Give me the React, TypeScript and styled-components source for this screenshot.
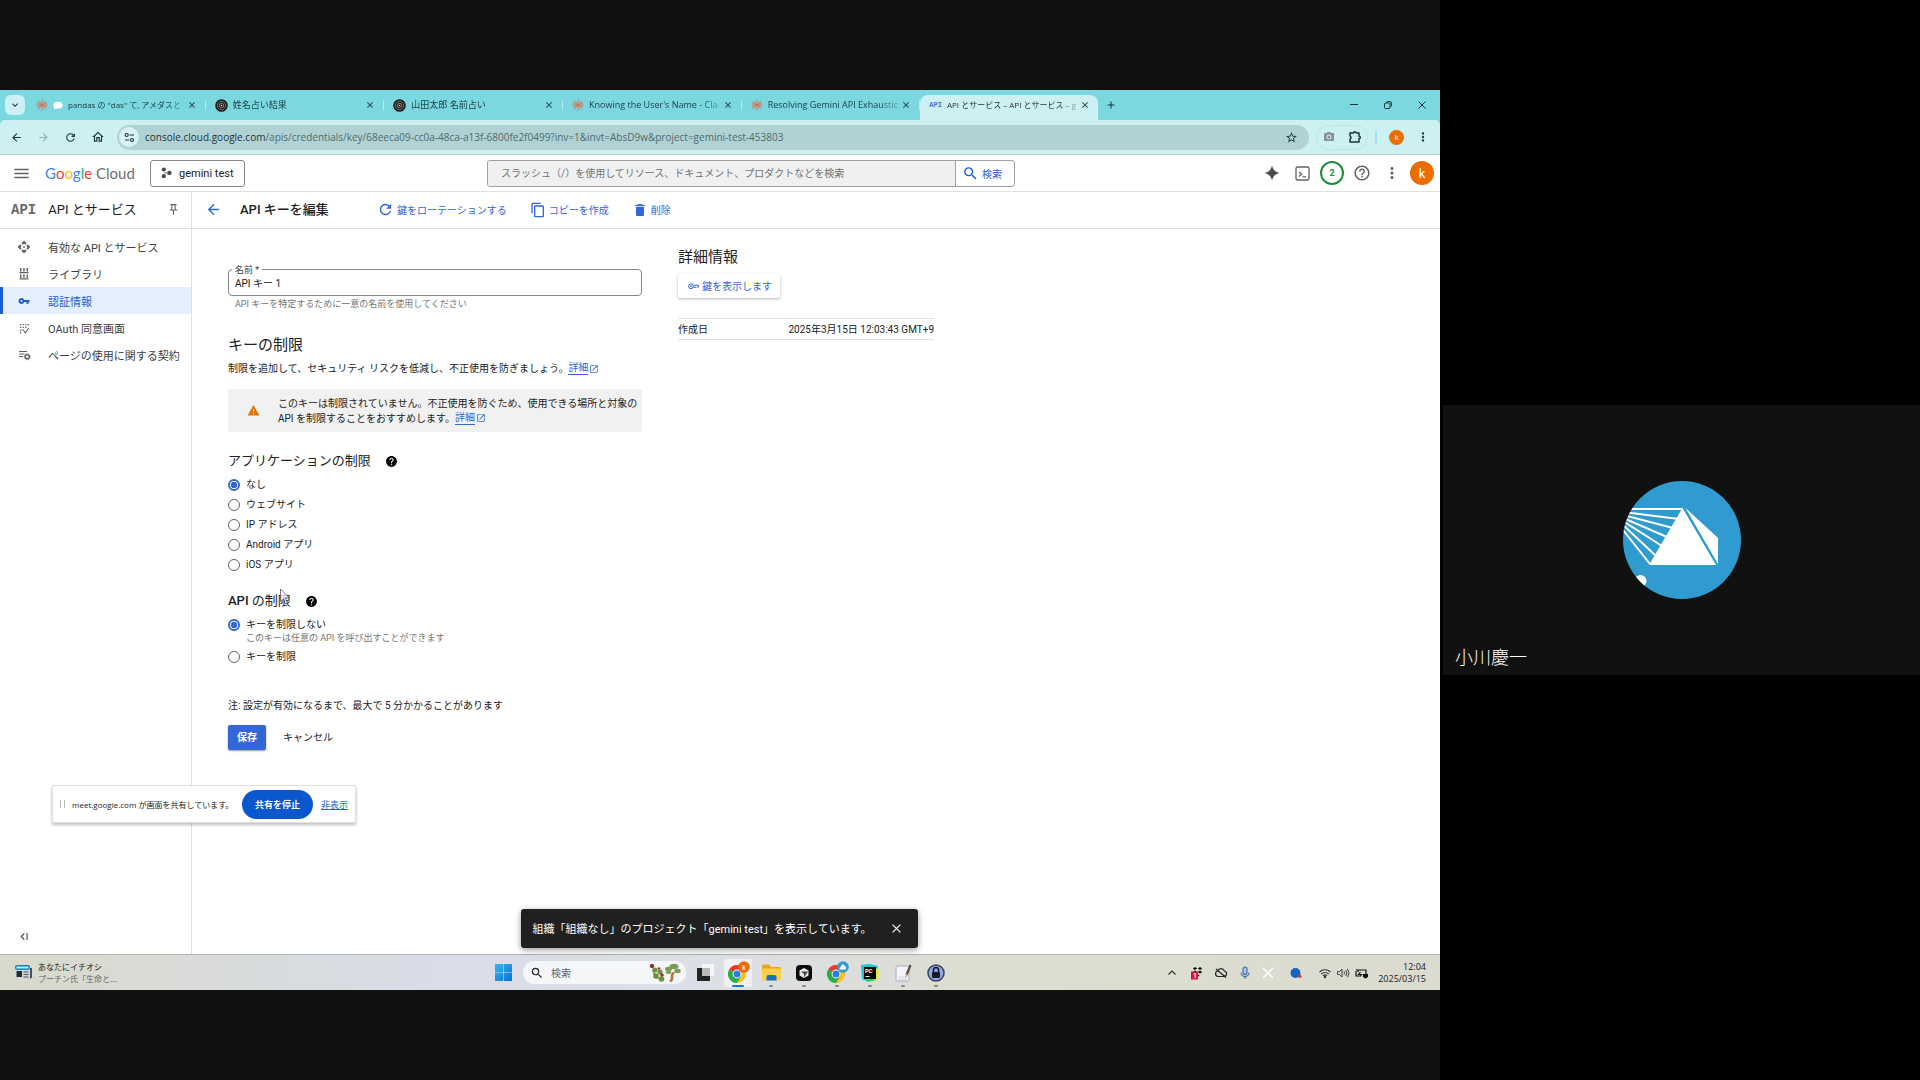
import React, { useState } from "react";
import styled, { createGlobalStyle, css } from "styled-components";
import {
  MdApi, MdArrowBack, MdArrowForward, MdClose, MdContentCopy, MdDelete, MdHelp, MdHelpOutline, MdMenu,
  MdMoreVert, MdOpenInNew, MdOutlineHome, MdOutlinePushPin,
  MdPhotoCamera, MdRefresh, MdSearch, MdStarOutline, MdVpnKey, MdWarning, MdAdd, MdExpandMore,
} from "react-icons/md";

const ui = `Roboto, "Noto Sans CJK JP", sans-serif`;
const chromeFont = `"Open Sans", "Noto Sans CJK JP", sans-serif`;
const blue = "#1a5fd0";
const linkBlue = "#3367d6";
const line = "#e0e0e0";

const Global = createGlobalStyle`
  *, *::before, *::after { box-sizing: border-box; }
  body { margin: 0; background: #000; font-family: ${ui}; color: #202124; }
  button, input { font: inherit; color: inherit; }
  button { border: 0; padding: 0; background: none; cursor: pointer; }
  h1, h2, h3, p, ul { margin: 0; padding: 0; font-weight: 400; }
  svg { display: block; flex: none; }
`;

/* ---------- call layout ---------- */

const Call = styled.div`
  display: grid;
  grid-template-columns: 3fr 1fr;
  min-height: 100vh;
  background: #000;
`;

const Stage = styled.main`
  display: flex;
  flex-direction: column;
  justify-content: center;
  background: #111;
`;

const Desktop = styled.section`
  position: relative;
  display: flex;
  flex-direction: column;
  aspect-ratio: 16 / 10;
  background: #fff;
  overflow: hidden;
`;

const People = styled.aside`
  display: flex;
  flex-direction: column;
  justify-content: center;
  padding-left: 3px;
`;

const Tile = styled.div`
  position: relative;
  display: flex;
  align-items: center;
  justify-content: center;
  aspect-ratio: 53 / 30;
  background: #111;
`;

const TileName = styled.span`
  position: absolute;
  left: 12px;
  bottom: 4px;
  font-size: 18px;
  line-height: 26px;
  color: #fff;
  font-weight: 300;
`;

/* ---------- browser ---------- */

const IconButton = styled.button<{ $w?: number; $h?: number; $color?: string }>`
  display: flex;
  align-items: center;
  justify-content: center;
  flex: none;
  width: ${(p) => p.$w ?? 20}px;
  height: ${(p) => p.$h ?? 20}px;
  color: ${(p) => p.$color ?? "#1f3336"};
`;

const TabStrip = styled.div`
  display: flex;
  align-items: center;
  height: 30px;
  flex: none;
  padding-left: 5px;
  background: #7bd8e1;
  font-family: ${chromeFont};
`;

const TabSearch = styled(IconButton)`
  margin-right: 2px;
  border-radius: 6px;
  background: #cdf0f3;
`;

const Tabs = styled.div`
  display: flex;
  align-self: stretch;
  flex: 0 1 1071px;
  min-width: 0;
`;

const Tab = styled.div<{ $active?: boolean; $compact?: boolean }>`
  display: flex;
  align-items: center;
  flex: 1 1 0;
  min-width: 0;
  gap: 5px;
  padding: 0 7px 0 9px;
  font-size: ${(p) => (p.$compact ? 8 : 9)}px;
  color: #1d4147;
  border-right: 1px solid #b5eaef;
  margin: 10px 0;
  ${(p) =>
    p.$active &&
    css`
      margin: 5px 0 0;
      padding-bottom: 5px;
      border: 0;
      border-radius: 8px 8px 0 0;
      background: #cdf0f3;
      color: #1f2d30;
    `}
`;

const TabTitle = styled.span`
  flex: 1;
  min-width: 0;
  margin-right: -3px;
  overflow: hidden;
  white-space: nowrap;
  line-height: 16px;
  mask-image: linear-gradient(to right, #000 85%, rgba(0, 0, 0, 0.3));
`;

const ApiMark = styled.span<{ $size: number }>`
  font: 700 ${(p) => p.$size}px "Liberation Mono", monospace;
  color: ${(p) => (p.$size < 10 ? "#4a6fdc" : "#6b6b6b")};
`;

const WindowButtons = styled.div`
  display: flex;
  gap: 14px;
  margin-left: auto;
  padding-right: 8px;
`;

const Toolbar = styled.div`
  display: flex;
  align-items: center;
  flex: none;
  height: 35px;
  padding: 0 7px 0 3px;
  background: #cdf0f3;
  border-bottom: 1px solid #b4cdd0;
  border-radius: 5px 5px 0 0;
  font-family: ${chromeFont};
`;

const ToolbarWrap = styled.div`
  flex: none;
  background: #7bd8e1;
`;

const Address = styled.div`
  display: flex;
  align-items: center;
  flex: 1;
  min-width: 0;
  height: 25px;
  margin: 0 7px 0 6px;
  padding: 0 8px 0 2px;
  border-radius: 13px;
  background: #b1d2d5;
`;

const SiteInfo = styled(IconButton)`
  margin-right: 6px;
  border-radius: 50%;
  background: #d8f2f4;
`;

const Url = styled.span`
  flex: 1;
  min-width: 0;
  overflow: hidden;
  white-space: nowrap;
  font-size: 10px;
  line-height: 16px;
  color: #4c6b6f;

  b { font-weight: 400; color: #1f3336; }
`;

const Extensions = styled.div`
  display: flex;
  align-items: center;
  justify-content: space-between;
  width: 52px;
  height: 25px;
  padding: 0 2px;
  border: 1px solid #b9e6ea;
  border-radius: 13px;
`;

const Rule = styled.span`
  width: 2px;
  height: 12px;
  margin: 0 12px 0 7px;
  background: #9fe1e8;
`;

const Avatar = styled.span<{ $size: number }>`
  display: flex;
  align-items: center;
  justify-content: center;
  width: ${(p) => p.$size}px;
  height: ${(p) => p.$size}px;
  border-radius: 50%;
  background: #ec6c00;
  color: #fff;
  font-size: ${(p) => (p.$size > 20 ? 13 : 8)}px;
  line-height: 1;
`;

const ProfileGroup = styled.div`
  display: flex;
  align-items: center;
  gap: 9px;
`;

/* ---------- console ---------- */

const TopBar = styled.header`
  display: flex;
  align-items: center;
  flex: none;
  height: 37px;
  padding: 0 6px 0 10px;
  border-bottom: 1px solid ${line};
`;

const Logo = styled.a`
  width: 95px;
  margin-left: 13px;
  font: 400 15px Lato, sans-serif;
  line-height: 20px;
  color: #6b6f73;
  text-decoration: none;
  white-space: nowrap;
`;

const Letter = styled.span<{ $c: string }>`
  color: ${(p) => p.$c};
`;

const ProjectButton = styled.button`
  display: flex;
  align-items: center;
  gap: 7px;
  width: 95px;
  height: 27px;
  padding-left: 10px;
  margin-left: 10px;
  border: 1px solid #80868b;
  border-radius: 3px;
  font-size: 11px;
  white-space: nowrap;
`;

const SearchForm = styled.form`
  display: flex;
  flex: 0 1 528px;
  height: 27px;
  margin-left: 242px;
  border: 1px solid #9aa0a6;
  border-radius: 3px;
  overflow: hidden;
`;

const SearchInput = styled.input`
  flex: 1;
  min-width: 0;
  padding: 0 13px;
  border: 0;
  border-right: 1px solid #9aa0a6;
  background: #f0f0f0;
  font-size: 10px;
  outline: none;

  &::placeholder { color: #6f7377; opacity: 1; }
`;

const SearchButton = styled.button`
  display: flex;
  align-items: center;
  gap: 3px;
  width: 58px;
  padding-left: 6px;
  font-size: 10px;
  color: ${blue};
`;

const TopActions = styled.div`
  display: flex;
  align-items: center;
  gap: 6px;
  margin-left: auto;
`;

const Trial = styled.button`
  width: 24px;
  height: 24px;
  border: 2px solid #1e8e3e;
  border-radius: 50%;
  font-size: 9px;
  font-weight: 700;
  color: #1e8e3e;
`;

const Console = styled.div`
  display: grid;
  grid-template-columns: 192px 1fr;
  flex: 1;
  min-height: 0;
`;

const Side = styled.nav`
  display: flex;
  flex-direction: column;
  border-right: 1px solid ${line};
`;

const BarRow = styled.div`
  display: flex;
  align-items: center;
  flex: none;
  height: 37px;
  padding-bottom: 1px;
  border-bottom: 1px solid ${line};
  white-space: nowrap;
`;

const SideHead = styled(BarRow)`
  padding-right: 8px;
  padding-left: 11px;
`;

const SideTitle = styled.h2`
  flex: 1;
  margin-left: 12px;
  font-size: 13px;
  line-height: 20px;
`;

const NavList = styled.ul`
  flex: 1;
  padding-top: 4px;
  list-style: none;
`;

const NavLink = styled.a<{ $active?: boolean }>`
  display: flex;
  align-items: center;
  gap: 16px;
  height: 27px;
  padding-left: 13px;
  border-left: 3px solid ${(p) => (p.$active ? blue : "transparent")};
  background: ${(p) => (p.$active ? "#e5effb" : "transparent")};
  color: ${(p) => (p.$active ? blue : "#3c4043")};
  font-size: 11px;
  text-decoration: none;
  white-space: nowrap;

  svg { width: 16px; color: ${(p) => (p.$active ? blue : "#5f6368")}; }
`;

const Collapse = styled(IconButton)`
  margin: 0 0 8px 14px;
`;

const PageHead = styled(BarRow)`
  padding-left: 11px;
`;

const PageTitle = styled.h1`
  width: 126px;
  margin-left: 17px;
  font-size: 13px;
  font-weight: 500;
  line-height: 20px;
`;

const PageActions = styled.div`
  display: flex;
  gap: 23px;
  margin-left: 11px;
`;

const PageAction = styled.button`
  display: flex;
  align-items: center;
  gap: 3px;
  font-size: 10px;
  color: ${linkBlue};
`;

const Content = styled.div`
  display: flex;
  align-items: flex-start;
  gap: 36px;
  padding-left: 36px;
  font-size: 10px;
  line-height: 15px;
`;

const Form = styled.form`
  flex: 0 1 414px;
  padding-top: 40px;
  white-space: nowrap;
`;

const Field = styled.div`
  position: relative;
  display: flex;
`;

const FieldLabel = styled.label`
  position: absolute;
  top: -5px;
  left: 4px;
  padding: 0 3px;
  background: #fff;
  font-size: 9px;
  line-height: 12px;
  color: #3c4043;
`;

const FieldInput = styled.input`
  flex: 1;
  min-width: 0;
  height: 27px;
  padding: 0 6px;
  border: 1px solid #80868b;
  border-radius: 4px;
  background: transparent;
  outline: none;
`;

const Hint = styled.p<{ $indent: number }>`
  padding-left: ${(p) => p.$indent}px;
  font-size: 9px;
  line-height: 12px;
  color: #757575;
`;

const FieldHint = styled(Hint)`
  margin-top: 2px;
`;

const Heading = styled.h2`
  font-size: 15px;
  line-height: 20px;
`;

const KeyHeading = styled(Heading)`
  margin: 25px 0 6px;
`;

const SubHeading = styled.h3`
  display: flex;
  align-items: center;
  gap: 14px;
  margin: 20px 0 8px;
  font-size: 13px;
  line-height: 18px;

  b { font-weight: 500; }
  svg { color: #000; }
`;

const Text = styled.p`
  display: flex;
  align-items: center;
`;

const DocLink = styled.a`
  display: inline-flex;
  align-items: center;
  gap: 1px;
  color: ${linkBlue};
  text-decoration: none;

  span { border-bottom: 1px solid ${linkBlue}; line-height: 12px; }
`;

const Notice = styled.div`
  display: flex;
  align-items: center;
  gap: 18px;
  min-height: 43px;
  margin-top: 13px;
  padding-left: 19px;
  border-radius: 3px;
  background: #f1f1f1;

  > svg { color: #e37400; }
`;

const Options = styled.div`
  display: flex;
  flex-direction: column;
  gap: 6px;
`;

const Option = styled.label`
  display: flex;
  align-items: center;
  gap: 6px;
  line-height: 14px;
`;

const Radio = styled.input`
  appearance: none;
  width: 12px;
  height: 12px;
  margin: 0;
  border: 1px solid #5f6368;
  border-radius: 50%;

  &:checked {
    border: 2px solid ${linkBlue};
    background: radial-gradient(circle, ${linkBlue} 0 3px, #fff 3px);
  }
`;

const FormNote = styled.p`
  margin: 35px 0 12px;
  line-height: 14px;
`;

const Buttons = styled.div`
  display: flex;
  gap: 17px;
`;

const Save = styled.button`
  width: 38px;
  height: 25px;
  border-radius: 2px;
  background: ${linkBlue};
  box-shadow: 0 1px 2px rgba(0, 0, 0, 0.4);
  color: #fff;
  font-weight: 700;
`;

const Details = styled.section`
  flex: 0 1 256px;
  padding-top: 18px;
  white-space: nowrap;
`;

const ShowKey = styled.button`
  display: flex;
  align-items: center;
  gap: 3px;
  height: 24px;
  margin: 7px 0 20px;
  padding: 0 8px 0 10px;
  border-radius: 2px;
  box-shadow: 0 1px 3px rgba(0, 0, 0, 0.3);
  color: ${linkBlue};
`;

const Facts = styled.table`
  width: 100%;
  border-collapse: collapse;

  tr { height: 21px; border: solid ${line}; border-width: 1px 0; }
  th, td { padding: 0; font-weight: 400; text-align: left; }
  td { text-align: right; }
`;

/* ---------- floating layers ---------- */

const ShareBar = styled.div`
  position: absolute;
  left: 52px;
  bottom: 167px;
  display: flex;
  align-items: center;
  height: 38px;
  padding: 0 7px;
  border: 1px solid ${line};
  background: #fff;
  box-shadow: 0 2px 3px rgba(0, 0, 0, 0.25);
  font-family: ${chromeFont};
  font-size: 9px;
  white-space: nowrap;
`;

const Grip = styled.span`
  width: 5px;
  height: 8px;
  margin-right: 7px;
  border: solid #b8b8b8;
  border-width: 0 1px;
`;

const ShareText = styled.span`
  width: 162px;
  font-size: 8px;
`;

const StopShare = styled.button`
  height: 29px;
  padding: 0 13px;
  margin: 0 8px;
  border-radius: 15px;
  background: #0b57d0;
  color: #fff;
  font-weight: 700;
`;

const HideLink = styled.a`
  width: 27px;
  color: #1a66c8;
`;

const Toast = styled.div`
  position: absolute;
  right: 2px;
  bottom: 42px;
  left: 0;
  display: flex;
  align-items: center;
  justify-content: space-between;
  width: 397px;
  height: 39px;
  margin: 0 auto;
  padding: 0 11px 1px 12px;
  border-radius: 3px;
  background: #202020;
  box-shadow: 0 2px 6px rgba(0, 0, 0, 0.4);
  color: #fff;
  font-size: 11px;
  white-space: nowrap;
`;

const Pointer = styled.svg`
  position: absolute;
  top: 498px;
  left: 279px;
`;

/* ---------- taskbar ---------- */

const Taskbar = styled.footer`
  display: grid;
  grid-template-columns: 1fr auto 1fr;
  align-items: center;
  flex: none;
  height: 36px;
  border-top: 1px solid #b3b4b0;
  background: linear-gradient(to right, #d9dacc, #d8dde8 30%, #dcdfe6 50%, #ddddd0 68%, #dbdbd0);
  font-family: ${chromeFont};
`;

const Widget = styled.button`
  display: flex;
  align-items: center;
  gap: 6px;
  padding-left: 15px;
  font-size: 8px;
  line-height: 12px;
  text-align: left;
  font-family: "Noto Sans CJK JP", sans-serif;

  small { display: block; font-size: 8px; color: #666; }
`;

const Dock = styled.div`
  display: flex;
  align-items: center;
  gap: 5px;
  padding-left: 5px;
`;

const DockSearch = styled.label`
  display: flex;
  align-items: center;
  gap: 7px;
  width: 163px;
  height: 23px;
  margin: 0 0 0 6px;
  padding: 0 5px 0 7px;
  border-radius: 12px;
  background: #f5f6f8;

  input {
    flex: 1;
    min-width: 0;
    padding: 0;
    border: 0;
    background: none;
    font-size: 10px;
    outline: none;
  }
  input::placeholder { color: #5f6368; opacity: 1; }
`;

const DockApp = styled.button<{ $state?: "open" | "active" }>`
  position: relative;
  display: flex;
  align-items: center;
  justify-content: center;
  width: 28px;
  height: 28px;
  border-radius: 3px;
  background: ${(p) => (p.$state === "active" ? "#f0f1f2" : "none")};

  &::after {
    content: "";
    position: absolute;
    bottom: 0;
    width: ${(p) => (p.$state === "active" ? 12 : 4)}px;
    height: 2px;
    border-radius: 1px;
    background: ${(p) => (p.$state === "active" ? "#1a78c8" : p.$state ? "#888" : "transparent")};
  }
`;

const Tray = styled.div`
  display: flex;
  align-items: center;
  justify-content: flex-end;
  gap: 10px;
  padding-right: 14px;
`;

const TrayGroup = styled.div`
  display: flex;
  gap: 4px;
  margin-left: 5px;
`;

const Clock = styled.time`
  font-size: 9px;
  line-height: 12px;
  text-align: right;
  white-space: nowrap;
`;

/* ---------- drawings ---------- */

const Burst = () => (
  <svg width="12" height="12" viewBox="0 0 12 12" stroke="#d9704f" strokeWidth=".9" strokeLinecap="round">
    <path d="M6 .8v10.4M.8 6h10.400M2.500 2l7 8M9.500 2l-7 8M1.300 3.800l9.400 4.400M1.300 8.200l9.400-4.400" />
  </svg>
);

const Disc = () => (
  <svg width="13" height="13" viewBox="0 0 13 13" fill="none">
    <circle cx="6.500" cy="6.500" r="6.300" fill="#1d1d1d" />
    <circle cx="6.500" cy="6.500" r="4.200" stroke="#8d8580" strokeWidth=".8" />
    <circle cx="6.500" cy="6.500" r="2.200" stroke="#a79f9a" strokeWidth=".8" />
    <circle cx="6.500" cy="6.500" r=".8" fill="#ccc" />
  </svg>
);

const Bubble = () => (
  <svg width="10" height="9" viewBox="0 0 10 9" fill="#fff">
    <ellipse cx="5" cy="4.200" rx="4.600" ry="3.400" />
    <path d="M1.400 5.500L.6 8.400 4 7z" />
  </svg>
);

const Tune = () => (
  <svg width="11" height="11" viewBox="0 0 11 11" fill="none" stroke="#1f3336" strokeWidth="1.100">
    <circle cx="2.700" cy="3" r="1.500" />
    <path d="M5.500 3H10M1 8h4.200" />
    <circle cx="8" cy="8" r="1.500" />
  </svg>
);

const Puzzle = () => (
  <svg width="14" height="14" viewBox="0 0 14 14" fill="none" stroke="#1f3336" strokeWidth="1.500" strokeLinejoin="round">
    <path d="M2 3h3.500a1.300 1.300 0 0 1 2.600 0H11v3.200a1.300 1.300 0 0 1 0 2.600V12H2V9.300q2-1.800 0-3.600z" />
  </svg>
);

const Minimize = () => (
  <svg width="8" height="8" viewBox="0 0 8 8" stroke="#1f3336"><path d="M0 3.500h8" /></svg>
);

const Restore = () => (
  <svg width="8" height="8" viewBox="0 0 8 8" fill="none" stroke="#1f3336">
    <rect x=".5" y="2" width="5.500" height="5.500" rx="1" />
    <path d="M2.300 1.700Q2.400.6 3.600.6H6q1.500 0 1.500 1.500v2.400q0 1.100-1.100 1.200" />
  </svg>
);

const Cross = ({ color = "#1f3336", size = 8 }: { color?: string; size?: number }) => (
  <svg width={size} height={size} viewBox="0 0 8 8" stroke={color} strokeWidth="1"><path d="M.5.5l7 7M7.500.5l-7 7" /></svg>
);

const ProjectDots = () => (
  <svg width="11" height="12" viewBox="0 0 11 12" fill="#4a4d50">
    <circle cx="2.800" cy="2.500" r="2.100" /><circle cx="2.800" cy="9.200" r="2.100" /><circle cx="8.400" cy="5.900" r="2.200" />
    <path d="M3 5.200h3.500v1.400H3z" opacity=".5" />
  </svg>
);

const Spark = () => (
  <svg width="16" height="16" viewBox="0 0 16 16" fill="#4a4d50">
    <path d="M8 .5C8.800 4.800 11.200 7.200 15.500 8 11.200 8.800 8.800 11.200 8 15.500 7.200 11.200 4.800 8.800.5 8 4.800 7.200 7.200 4.800 8 .5z" />
  </svg>
);

const Shell = () => (
  <svg width="15" height="15" viewBox="0 0 15 15" fill="none" stroke="currentColor" strokeWidth="1.300">
    <rect x="1" y="1" width="13" height="13" rx="1.500" />
    <path d="M4 6l2.500 2.200L4 10.400M7.500 10.800h3.500" />
  </svg>
);

const Library = () => (
  <svg width="16" height="12" viewBox="0 0 16 12" fill="currentColor">
    <path d="M4 0h1.500v3.500H4zM7.200 0h1.500v3.500H7.200zM10.500 0H12v3.500h-1.500zM3.500 4h9v1.200h-9zM4 6.500h1.500v3.300H4zM7.200 6.500h1.500v3.300H7.200zM10.500 6.500H12v3.300h-1.500zM3.500 10.300h9v1.200h-9z" />
  </svg>
);

const Consent = () => (
  <svg width="16" height="12" viewBox="0 0 16 12" fill="currentColor">
    <path d="M4 2h1.300v1.300H4zM6.600 2h1.300v1.300H6.600zM9.200 2h1.300v1.300H9.200zM11.600 2h1.300v1.300h-1.300zM4 4.800h1.300v1.300H4zM6.600 4.800h1.300v1.300H6.600zM9.200 4.800h1.300v1.300H9.200zM4 7.600h1.300v1.300H4zM4 10.200h1.300v1.300H4zM6.600 7.600h1.300v1.300H6.600z" />
    <path d="M8 9.200l1.400 1.600L12.800 6" fill="none" stroke="currentColor" strokeWidth="1.100" />
  </svg>
);

const Agreement = () => (
  <svg width="16" height="12" viewBox="0 0 16 12" fill="none" stroke="currentColor">
    <path d="M3 2.500h8M3 5h5.500M3 7.500h4" strokeWidth="1.200" />
    <circle cx="11.300" cy="7.800" r="2" strokeWidth="1.400" />
    <circle cx="11.300" cy="7.800" r="3" strokeWidth="1" strokeDasharray="1.200 1.150" />
  </svg>
);

const KeyOutline = () => (
  <svg width="11" height="8" viewBox="0 0 11 8" fill="none" stroke="currentColor" strokeWidth="1">
    <circle cx="3" cy="4.300" r="2.400" /><circle cx="3" cy="4.300" r=".6" />
    <path d="M5.400 3.300h5v2H9.300M5.400 5.300h3" />
  </svg>
);

const CollapseMark = () => (
  <svg width="9" height="9" viewBox="0 0 9 9" fill="none" stroke="#4a4d50" strokeWidth="1.200">
    <path d="M4.300 1.500l-3 3 3 3M7.100 1v7" />
  </svg>
);

const PyramidAvatar = () => (
  <svg width="118" height="118" viewBox="0 0 118 118">
    <clipPath id="disc"><circle cx="59" cy="59" r="59" /></clipPath>
    <g clipPath="url(#disc)">
      <rect width="118" height="118" fill="#2f9bcf" />
      <g stroke="#fff" strokeWidth="2">
        <path d="M0 28h60M0 31l56 7M0 34l50 13M0 37l44 19M0 40l39 25M0 44l33 31M0 49l27 34" />
      </g>
      <path d="M59.500 27L93 84H26z" fill="#fff" />
      <path d="M62.500 27L95 57v26z" fill="#fff" />
      <circle cx="17.500" cy="100" r="6" fill="#fff" />
      <path d="M11 97l9 9" stroke="#c22" strokeWidth="1" />
    </g>
  </svg>
);

const NewsIcon = () => (
  <svg width="17" height="15" viewBox="0 0 17 15">
    <rect x="1" y="5" width="15" height="9.500" rx="1" fill="#d4d7d9" />
    <path d="M15 3h2v9.500l-2 1.500z" fill="#45525c" />
    <rect width="15" height="5" rx="2" fill="#1684b8" /><rect x="1.500" y="1.500" width="12" height="2" fill="#bfe8f5" />
    <rect x="1.500" y="6" width="5.500" height="6" fill="#222c33" />
    <path d="M8.500 7h5M8.500 9.500h5M8.500 12h5" stroke="#4b555c" />
  </svg>
);

const WindowsLogo = () => (
  <svg width="17" height="17" viewBox="0 0 17 17">
    <linearGradient id="win" x2="1" y2="1"><stop stopColor="#35b8ef" /><stop offset="1" stopColor="#0871cf" /></linearGradient>
    <path d="M0 0h8.200v8.200H0zM8.800 0H17v8.200H8.800zM0 8.800h8.200V17H0zM8.800 8.800H17V17H8.800z" fill="url(#win)" />
  </svg>
);

const Bonsai = () => (
  <svg width="32" height="20" viewBox="0 0 32 20">
    <path d="M4 6q1 10 9 10" stroke="#a3a07a" strokeWidth="2" fill="none" />
    <g fill="#6f8f3a"><circle cx="6" cy="7" r="2.500" /><circle cx="11" cy="9" r="2.500" /><circle cx="7" cy="13" r="2.800" /><circle cx="12.500" cy="16" r="2.800" /></g>
    <g fill="#8d3340"><circle cx="3" cy="3" r="2.200" /><circle cx="13" cy="12" r="1.800" /><circle cx="10" cy="5.500" r="1.300" /></g>
    <path d="M21 18.500c5-3-1-5 4-9" stroke="#b8733c" strokeWidth="2.500" fill="none" />
    <g fill="#7d9a55"><ellipse cx="19.500" cy="6" rx="3.500" ry="2.200" /><ellipse cx="25" cy="3.500" rx="4.500" ry="2.800" /><ellipse cx="28.500" cy="8" rx="3.200" ry="2.200" /><ellipse cx="19.500" cy="9.500" rx="3" ry="1.400" /></g>
  </svg>
);

const TaskView = () => (
  <svg width="17" height="17" viewBox="0 0 17 17">
    <rect x="5" width="12" height="12" fill="#f7f7f7" /><rect y="4" width="13" height="13" fill="#222" /><rect x="5" y="4" width="8" height="8" fill="#b9b9b9" />
  </svg>
);

const ChromeLogo = ({ badge }: { badge: "k" | "pyramid" }) => (
  <svg width="24" height="24" viewBox="0 0 24 24">
    <circle cx="11" cy="13" r="9" fill="#fbc116" />
    <path d="M11 13L3.200 8.500A9 9 0 0 1 18.800 8.500z" fill="#e33b2e" />
    <path d="M11 13L3.200 8.500A9 9 0 0 0 11 22l4-6.700z" fill="#2da94f" />
    <circle cx="11" cy="13" r="4.400" fill="#fff" /><circle cx="11" cy="13" r="3.500" fill="#2a7de8" />
    <circle cx="18" cy="6" r="5.800" fill={badge === "k" ? "#ec6c00" : "#2f9bcf"} />
    {badge === "k" ? (
      <text x="18" y="8.500" textAnchor="middle" fontSize="7" fill="#fff" fontFamily="Roboto">k</text>
    ) : (
      <path d="M17.500 3l3.500 3v2.500h-7z" fill="#fff" />
    )}
  </svg>
);

const Folder = () => (
  <svg width="19" height="17" viewBox="0 0 19 17">
    <path d="M0 2q0-1.500 1.500-1.500H7L9 3h8.500Q19 3 19 4.500V8H0z" fill="#e9a51c" />
    <rect y="4.500" width="19" height="12" rx="1.500" fill="#fccf4b" /><path d="M4.500 16.500V13q0-2 2-2h6q2 0 2 2v3.500z" fill="#1673c4" />
  </svg>
);

const CubeApp = () => (
  <svg width="16" height="16" viewBox="0 0 16 16">
    <rect width="16" height="16" rx="4" fill="#0c0c0c" /><path d="M8 3l4.500 2.500v5L8 13l-4.500-2.500v-5z" fill="#e6e6e6" /><path d="M5 6.500h7L8 12.500V9z" fill="#444" />
  </svg>
);

const PyCharm = () => (
  <svg width="18" height="18" viewBox="0 0 18 18">
    <path d="M0 1L9 0l8 2-2 8-8 8-6-3z" fill="#16c8d8" /><path d="M12 3l6 3-1 10-7 2-4-3z" fill="#e5ea35" /><path d="M1 11l6 7 8-2z" fill="#27d07c" />
    <rect x="3" y="3" width="12" height="12" fill="#000" /><text x="4" y="9" fontSize="6" fontWeight="700" fill="#fff" fontFamily="Roboto">PC</text><path d="M4.500 12.500h4" stroke="#fff" />
  </svg>
);

const Notepad = () => (
  <svg width="17" height="18" viewBox="0 0 17 18">
    <rect x="1" y="2" width="13" height="15" rx="1.500" fill="#f3f3fa" stroke="#a8a8ba" /><path d="M3 15h9M3 13h9" stroke="#d3d3e2" />
    <path d="M15.500 1l-4 10" stroke="#5d4a44" strokeWidth="2.200" /><path d="M11.800 10l-1 3" stroke="#dba36c" strokeWidth="1.500" />
  </svg>
);

const LockApp = () => (
  <svg width="18" height="18" viewBox="0 0 18 18" fill="none">
    <circle cx="9" cy="9" r="8" fill="#8ea5e6" stroke="#3a4254" strokeWidth="1.500" />
    <rect x="5" y="8" width="8" height="6" rx="1" fill="#161b2b" /><path d="M6.500 8V6a2.500 2.500 0 0 1 5 0v2" stroke="#161b2b" strokeWidth="1.500" />
  </svg>
);

const Chevron = () => (
  <svg width="14" height="8" viewBox="0 0 14 8" fill="none" stroke="#333" strokeWidth="1.200"><path d="M2.500 5.500L6 2l3.500 3.500" /></svg>
);

const Dropbox = () => (
  <svg width="14" height="14" viewBox="0 0 14 14">
    <path d="M5 1l2.200 1.500L5 4 2.800 2.500zM10 1l2.200 1.500L10 4 7.800 2.500zM5 4.500L7.200 6 5 7.500 2.800 6zM10 4.500L12.200 6 10 7.500 7.800 6zM7.500 8L9.700 9.500 7.500 11z" fill="#111" />
    <rect x="1" y="5.500" width="7" height="8" fill="#d9123a" /><text x="3" y="12" fontSize="7" fontWeight="700" fill="#fff" fontFamily="Roboto">1</text>
  </svg>
);

const CloudOff = () => (
  <svg width="14" height="14" viewBox="0 0 14 14" fill="none" stroke="#222" strokeWidth="1.200">
    <path d="M4 10.500a2.800 2.800 0 0 1-.3-5.500 3.600 3.600 0 0 1 6.700 0 2.800 2.800 0 0 1-.2 5.500zM2 3l10 8.500" />
  </svg>
);

const Mic = () => (
  <svg width="14" height="14" viewBox="0 0 14 14" fill="none" stroke="#3568b0" strokeWidth="1.100">
    <rect x="5" y="1" width="4" height="7.500" rx="2" fill="#a9c4e8" /><path d="M3 6.500a4 4 0 0 0 8 0M7 10.500V13" />
  </svg>
);

const BlueDisc = () => (
  <svg width="14" height="14" viewBox="0 0 14 14"><circle cx="6.500" cy="7" r="5" fill="#1266c2" /><path d="M9 8l2.500.5 1.500 3-3 .5z" fill="#c8452c" /></svg>
);

const Wifi = () => (
  <svg width="14" height="14" viewBox="0 0 14 14" fill="none" stroke="#333" strokeWidth="1.100">
    <path d="M1.500 6a8 8 0 0 1 11 0M3.300 8a5.400 5.400 0 0 1 7.400 0M5 9.800a3 3 0 0 1 4 0" /><circle cx="7" cy="11" r=".7" fill="#333" />
  </svg>
);

const Volume = () => (
  <svg width="14" height="14" viewBox="0 0 14 14" fill="none" stroke="#444" strokeWidth="1">
    <path d="M1.500 5.500h2L6 3v8L3.500 8.500h-2zM8 5.500q1 1.500 0 3M9.800 4q2 3 0 6M11.500 2.800q3 4.200 0 8.400" />
  </svg>
);

const Battery = () => (
  <svg width="14" height="14" viewBox="0 0 14 14" fill="none" stroke="#111" strokeWidth="1.200">
    <path d="M4 4h8v5M2 5v5h5M2.500 3l2 3M6.500 6l-2 2.500h3L6 10.500" /><path d="M9.500 8.500h4v2q-2 3-4 0z" fill="#111" />
  </svg>
);

/* ---------- page ---------- */

const tabs = [
  { icon: <><Burst /><Bubble /></>, title: 'pandas の "das" て, アメダスと', compact: true },
  { icon: <Disc />, title: "姓名占い結果" },
  { icon: <Disc />, title: "山田太郎 名前占い" },
  { icon: <Burst />, title: "Knowing the User's Name - Cla" },
  { icon: <Burst />, title: "Resolving Gemini API Exhaustic" },
  { icon: <ApiMark $size={7}>API</ApiMark>, title: "API とサービス – API とサービス – g", active: true, compact: true },
];

const navItems = [
  { icon: <MdApi size={14} />, label: "有効な API とサービス" },
  { icon: <Library />, label: "ライブラリ" },
  { icon: <MdVpnKey size={12} />, label: "認証情報", active: true },
  { icon: <Consent />, label: "OAuth 同意画面" },
  { icon: <Agreement />, label: "ページの使用に関する契約" },
];

const appLimits = ["なし", "ウェブサイト", "IP アドレス", "Android アプリ", "iOS アプリ"];

const brand: [string, string][] = [
  ["G", "#4285f4"], ["o", "#ea4335"], ["o", "#fbbc04"], ["g", "#4285f4"], ["l", "#34a853"], ["e", "#ea4335"],
];

const Browser = () => (
  <>
    <TabStrip>
      <TabSearch aria-label="タブを検索"><MdExpandMore size={12} /></TabSearch>
      <Tabs>
        {tabs.map((t) => (
          <Tab key={t.title} $active={t.active} $compact={t.compact}>
            {t.icon}
            <TabTitle>{t.title}</TabTitle>
            <IconButton $w={12} $h={16} aria-label="タブを閉じる"><MdClose size={10} /></IconButton>
          </Tab>
        ))}
      </Tabs>
      <IconButton $w={26} aria-label="新しいタブ"><MdAdd size={12} /></IconButton>
      <WindowButtons>
        <IconButton aria-label="最小化"><Minimize /></IconButton>
        <IconButton aria-label="元に戻す"><Restore /></IconButton>
        <IconButton aria-label="閉じる"><Cross /></IconButton>
      </WindowButtons>
    </TabStrip>
    <ToolbarWrap>
      <Toolbar>
        <IconButton $w={27} aria-label="戻る"><MdArrowBack size={13} /></IconButton>
        <IconButton $w={27} $color="#8fb0b3" aria-label="進む"><MdArrowForward size={13} /></IconButton>
        <IconButton $w={27} aria-label="再読み込み"><MdRefresh size={13} /></IconButton>
        <IconButton $w={27} aria-label="ホーム"><MdOutlineHome size={14} /></IconButton>
        <Address>
          <SiteInfo aria-label="サイト情報"><Tune /></SiteInfo>
          <Url>
            <b>console.cloud.google.com</b>/apis/credentials/key/68eeca09-cc0a-48ca-a13f-6800fe2f0499?inv=1&amp;invt=AbsD9w&amp;project=gemini-test-453803
          </Url>
          <IconButton aria-label="ブックマーク"><MdStarOutline size={13} /></IconButton>
        </Address>
        <Extensions>
          <IconButton $color="#8a9496" aria-label="カメラ"><MdPhotoCamera size={12} /></IconButton>
          <IconButton aria-label="拡張機能"><Puzzle /></IconButton>
        </Extensions>
        <Rule />
        <ProfileGroup>
          <Avatar $size={15}>k</Avatar>
          <IconButton aria-label="メニュー"><MdMoreVert size={14} /></IconButton>
        </ProfileGroup>
      </Toolbar>
    </ToolbarWrap>
  </>
);

const Header = () => (
  <TopBar>
    <IconButton $w={22} $color="#5f6368" aria-label="ナビゲーション メニュー"><MdMenu size={19} /></IconButton>
    <Logo href="#home">
      {brand.map(([ch, c], i) => <Letter key={i} $c={c}>{ch}</Letter>)} Cloud
    </Logo>
    <ProjectButton><ProjectDots />gemini test</ProjectButton>
    <SearchForm onSubmit={(e) => e.preventDefault()}>
      <SearchInput aria-label="検索" placeholder="スラッシュ（/）を使用してリソース、ドキュメント、プロダクトなどを検索" />
      <SearchButton><MdSearch size={17} />検索</SearchButton>
    </SearchForm>
    <TopActions>
      <IconButton $w={24} aria-label="Gemini"><Spark /></IconButton>
      <IconButton $w={24} $color="#5f6368" aria-label="Cloud Shell"><Shell /></IconButton>
      <Trial>2</Trial>
      <IconButton $w={24} $color="#5f6368" aria-label="ヘルプ"><MdHelpOutline size={18} /></IconButton>
      <IconButton $w={24} $color="#5f6368" aria-label="その他"><MdMoreVert size={18} /></IconButton>
      <Avatar $size={24}>k</Avatar>
    </TopActions>
  </TopBar>
);

const Sidebar = () => (
  <Side>
    <SideHead>
      <ApiMark $size={14}>API</ApiMark>
      <SideTitle>API とサービス</SideTitle>
      <IconButton $color="#5f6368" aria-label="固定"><MdOutlinePushPin size={13} /></IconButton>
    </SideHead>
    <NavList>
      {navItems.map((n) => (
        <li key={n.label}><NavLink href="#nav" $active={n.active}>{n.icon}{n.label}</NavLink></li>
      ))}
    </NavList>
    <Collapse aria-label="折りたたむ"><CollapseMark /></Collapse>
  </Side>
);

const More = () => (
  <DocLink href="#docs"><span>詳細</span><MdOpenInNew size={10} /></DocLink>
);

const KeyForm = () => {
  const [name, setName] = useState("API キー 1");
  const [app, setApp] = useState(0);
  const [api, setApi] = useState(0);
  return (
    <Form onSubmit={(e) => e.preventDefault()}>
      <Field>
        <FieldInput id="key-name" value={name} onChange={(e) => setName(e.target.value)} />
        <FieldLabel htmlFor="key-name">名前 *</FieldLabel>
      </Field>
      <FieldHint $indent={7}>API キーを特定するために一意の名前を使用してください</FieldHint>
      <KeyHeading>キーの制限</KeyHeading>
      <Text>制限を追加して、セキュリティ リスクを低減し、不正使用を防ぎましょう。<More /></Text>
      <Notice>
        <MdWarning size={13} />
        <div>
          <p>このキーは制限されていません。不正使用を防ぐため、使用できる場所と対象の</p>
          <Text>API を制限することをおすすめします。<More /></Text>
        </div>
      </Notice>
      <SubHeading>アプリケーションの制限<MdHelp size={13} /></SubHeading>
      <Options role="radiogroup">
        {appLimits.map((label, i) => (
          <Option key={label}>
            <Radio type="radio" name="app" checked={app === i} onChange={() => setApp(i)} />{label}
          </Option>
        ))}
      </Options>
      <SubHeading><span><b>API</b> の制限</span><MdHelp size={13} /></SubHeading>
      <Options role="radiogroup">
        <div>
          <Option><Radio type="radio" name="api" checked={api === 0} onChange={() => setApi(0)} />キーを制限しない</Option>
          <Hint $indent={18}>このキーは任意の API を呼び出すことができます</Hint>
        </div>
        <Option><Radio type="radio" name="api" checked={api === 1} onChange={() => setApi(1)} />キーを制限</Option>
      </Options>
      <FormNote>注: 設定が有効になるまで、最大で 5 分かかることがあります</FormNote>
      <Buttons><Save>保存</Save><button type="button">キャンセル</button></Buttons>
    </Form>
  );
};

const KeyPage = () => (
  <div>
    <PageHead>
      <IconButton $color={linkBlue} aria-label="前に戻る"><MdArrowBack size={17} /></IconButton>
      <PageTitle>API キーを編集</PageTitle>
      <PageActions>
        <PageAction><MdRefresh size={17} />鍵をローテーションする</PageAction>
        <PageAction><MdContentCopy size={16} />コピーを作成</PageAction>
        <PageAction><MdDelete size={16} />削除</PageAction>
      </PageActions>
    </PageHead>
    <Content>
      <KeyForm />
      <Details>
        <Heading>詳細情報</Heading>
        <ShowKey><KeyOutline />鍵を表示します</ShowKey>
        <Facts>
          <tbody><tr><th scope="row">作成日</th><td>2025年3月15日 12:03:43 GMT+9</td></tr></tbody>
        </Facts>
      </Details>
    </Content>
  </div>
);

const WindowsBar = () => (
  <Taskbar>
    <Widget>
      <NewsIcon />
      <span>あなたにイチオシ<small>プーチン氏「生命と...</small></span>
    </Widget>
    <Dock>
      <IconButton $w={17} aria-label="スタート"><WindowsLogo /></IconButton>
      <DockSearch><MdSearch size={14} /><input aria-label="タスクバー検索" placeholder="検索" /><Bonsai /></DockSearch>
      <DockApp aria-label="タスク ビュー"><TaskView /></DockApp>
      <DockApp $state="active" aria-label="Chrome"><ChromeLogo badge="k" /></DockApp>
      <DockApp $state="open" aria-label="エクスプローラー"><Folder /></DockApp>
      <DockApp $state="open" aria-label="エディタ"><CubeApp /></DockApp>
      <DockApp $state="open" aria-label="Chrome 2"><ChromeLogo badge="pyramid" /></DockApp>
      <DockApp $state="open" aria-label="PyCharm"><PyCharm /></DockApp>
      <DockApp $state="open" aria-label="メモ帳"><Notepad /></DockApp>
      <DockApp $state="open" aria-label="ロック"><LockApp /></DockApp>
    </Dock>
    <Tray>
      <Chevron /><Dropbox /><CloudOff /><Mic /><Cross color="#fff" size={12} />
      <TrayGroup><BlueDisc /></TrayGroup>
      <TrayGroup><Wifi /><Volume /><Battery /></TrayGroup>
      <Clock>12:04<br />2025/03/15</Clock>
    </Tray>
  </Taskbar>
);

export default function App() {
  return (
    <Call>
      <Global />
      <Stage>
        <Desktop>
          <Browser />
          <Header />
          <Console><Sidebar /><KeyPage /></Console>
          <WindowsBar />
          <ShareBar>
            <Grip />
            <ShareText>meet.google.com が画面を共有しています。</ShareText>
            <StopShare>共有を停止</StopShare>
            <HideLink href="#hide">非表示</HideLink>
          </ShareBar>
          <Toast>
            組織「組織なし」のプロジェクト「gemini test」を表示しています。
            <IconButton aria-label="通知を閉じる"><Cross color="#fff" size={9} /></IconButton>
          </Toast>
          <Pointer width="12" height="18" viewBox="0 0 12 18" fill="#fff" fillOpacity=".7" stroke="#555" strokeWidth=".8">
            <path d="M1.500 1v12.500l3-2.800 2 5 2-.9-2-4.700h4z" />
          </Pointer>
        </Desktop>
      </Stage>
      <People>
        <Tile><PyramidAvatar /><TileName>小川慶一</TileName></Tile>
      </People>
    </Call>
  );
}
